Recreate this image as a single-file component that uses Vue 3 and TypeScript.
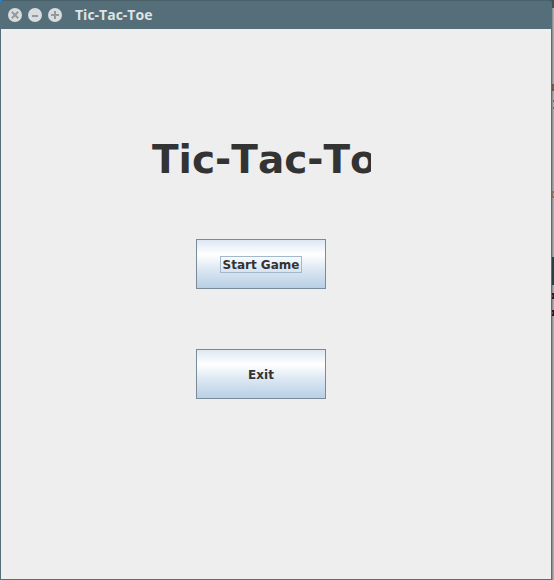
<script setup lang="ts">
import { ref } from 'vue'

const title = ref<string>('Tic-Tac-Toe')
const actions: string[] = ['Start Game', 'Exit']
const focused = ref<string>('Start Game')
</script>

<template>
  <div class="desktop">
    <main class="window">
      <header class="titlebar">
        <button class="control" type="button" aria-label="Close">
          <svg viewBox="0 0 14 14"><circle cx="7" cy="7" r="7" /><path d="M3.8 3.8l6.4 6.4M10.2 3.8l-6.4 6.4" /></svg>
        </button>
        <button class="control" type="button" aria-label="Minimize">
          <svg viewBox="0 0 14 14"><circle cx="7" cy="7" r="7" /><path d="M4 8h6" /></svg>
        </button>
        <button class="control" type="button" aria-label="Maximize">
          <svg viewBox="0 0 14 14"><circle cx="7" cy="7" r="7" /><path d="M3 7h8M7 3v8" /></svg>
        </button>
        <span class="caption">{{ title }}</span>
      </header>
      <section class="content">
        <h1 class="heading">{{ title }}</h1>
        <nav class="menu">
          <button
            v-for="action in actions"
            :key="action"
            class="action"
            type="button"
            @focus="focused = action"
          >
            <span class="label" :class="{ focused: focused === action }">{{ action }}</span>
          </button>
        </nav>
      </section>
    </main>
    <svg class="backdrop" viewBox="0 0 2 580" preserveAspectRatio="none" aria-hidden="true">
      <rect width="2" height="580" fill="#a9abac" />
      <rect width="1" height="580" fill="#8f9395" />
      <rect width="2" height="8" fill="#3f525a" />
      <rect y="257" width="2" height="28" fill="#2b3f45" />
      <path d="M0 84h2v7h-2z" fill="#6b5a50" />
      <path d="M1 86h1v3h-1z" fill="#3f79ae" />
      <path d="M1 100h1v2h-1zM1 107h1v2h-1z" fill="#7b6655" />
      <path d="M0 191h2v7h-2z" fill="#8a7263" />
      <path d="M1 193h1v3h-1z" fill="#9aa5ad" />
      <path d="M0 293h2v6h-2zM0 310h2v6h-2z" fill="#17202f" />
      <path d="M0 295h1v2h-1zM0 312h1v2h-1z" fill="#98451d" />
    </svg>
  </div>
</template>

<style>
body {
  margin: 0;
}
</style>

<style scoped>
.desktop {
  display: flex;
  min-height: 100vh;
  background:
    linear-gradient(#1e88e5, #1e88e5) 0 0 / 8px 4px no-repeat,
    linear-gradient(#425760, #425760) top / 100% 8px no-repeat,
    #a9abac;
}

.window {
  flex: 1;
  display: flex;
  flex-direction: column;
  box-sizing: border-box;
  border: 1px solid #546e7a;
  border-top-color: #496069;
  border-radius: 4px 4px 0 0;
  background: #546e7a;
}

.backdrop {
  width: 2px;
  height: 100vh;
}

.titlebar {
  display: flex;
  align-items: center;
  gap: 6px;
  height: 28px;
  padding: 0 7px;
  box-sizing: border-box;
  border-radius: 3px 3px 0 0;
  background: #546e7a;
}

.control {
  width: 14px;
  height: 14px;
  padding: 0;
  border: 0;
  background: none;
}

.control svg {
  display: block;
  width: 14px;
  height: 14px;
}

.control circle {
  fill: #d9dddf;
}

.control path {
  fill: none;
  stroke: #929a9d;
  stroke-width: 2;
}

.caption {
  margin-left: 7px;
  font: bold 14px/20px "Open Sans", "Noto Sans", sans-serif;
  font-kerning: none;
  color: #dfe3e5;
}

.content {
  flex: 1;
  display: flex;
  flex-direction: column;
  align-items: center;
  padding: 100px 30px 0 0;
  background: #eeeeee;
}

.heading {
  box-sizing: border-box;
  width: 220px;
  margin: 0;
  padding-left: 1px;
  overflow: hidden;
  white-space: nowrap;
  font: bold 39px/62px "DejaVu Sans", sans-serif;
  font-kerning: none;
  color: #333333;
}

.menu {
  display: flex;
  flex-direction: column;
  gap: 60px;
  margin-top: 48px;
}

.action {
  display: flex;
  align-items: center;
  justify-content: center;
  width: 130px;
  height: 50px;
  padding: 0;
  border: 1px solid #7a8a99;
  background: linear-gradient(#dde8f3, #ffffff 30%, #dde8f3 60%, #b8cfe5);
  font: bold 12px/13px "DejaVu Sans", sans-serif;
  font-kerning: none;
  color: #333333;
  outline: none;
}

.label {
  padding: 2px 2px 0;
  border: 1px solid transparent;
}

.label.focused {
  border-color: #a3b8cc;
}
</style>
